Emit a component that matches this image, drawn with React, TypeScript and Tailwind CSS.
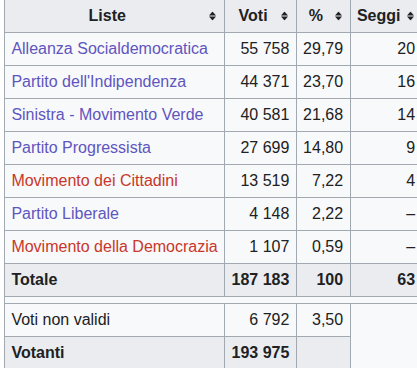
import React from 'react';

type Lista = {
  nome: string;
  voti: string;
  perc: string;
  seggi: string;
  redLink?: boolean;
};

const liste: Lista[] = [
  { nome: 'Alleanza Socialdemocratica', voti: '55 758', perc: '29,79', seggi: '20' },
  { nome: "Partito dell'Indipendenza", voti: '44 371', perc: '23,70', seggi: '16' },
  { nome: 'Sinistra - Movimento Verde', voti: '40 581', perc: '21,68', seggi: '14' },
  { nome: 'Partito Progressista', voti: '27 699', perc: '14,80', seggi: '9' },
  { nome: 'Movimento dei Cittadini', voti: '13 519', perc: '7,22', seggi: '4', redLink: true },
  { nome: 'Partito Liberale', voti: '4 148', perc: '2,22', seggi: '–' },
  { nome: 'Movimento della Democrazia', voti: '1 107', perc: '0,59', seggi: '–', redLink: true },
];

function SortIcon() {
  return (
    <svg
      className="absolute right-[8px] top-1/2 -translate-y-1/2"
      width="7"
      height="9"
      viewBox="0 0 7 9"
    >
      <polygon points="0,4 3.5,0 7,4" fill="#202122" />
      <polygon points="0,5 7,5 3.5,9" fill="#202122" />
    </svg>
  );
}

const cell = 'border border-[#a2a9b1] px-[6.4px] py-[3.2px] leading-[25.6px] whitespace-nowrap';
const head = `${cell} relative bg-[#eaecf0] font-bold text-center pr-[21px]`;

export default function App() {
  return (
    <div className="w-[417px] h-[368px] overflow-hidden bg-white">
      <table
        className="ml-1 -mt-px border-collapse table-fixed text-[16px] text-[#202122] bg-[#f8f9fa]"
        style={{ fontFamily: '"Liberation Sans", Arial, sans-serif' }}
      >
        <colgroup>
          <col className="w-[220px]" />
          <col className="w-[72px]" />
          <col className="w-[53px]" />
          <col className="w-[72px]" />
        </colgroup>
        <thead>
          <tr>
            <th className={head}>
              Liste
              <SortIcon />
            </th>
            <th className={head}>
              Voti
              <SortIcon />
            </th>
            <th className={head}>
              %
              <SortIcon />
            </th>
            <th className={head}>
              Seggi
              <SortIcon />
            </th>
          </tr>
        </thead>
        <tbody>
          {liste.map((l) => (
            <tr key={l.nome}>
              <td className={`${cell} ${l.redLink ? 'text-[#c8372a]' : 'text-[#5f55bf]'}`}>{l.nome}</td>
              <td className={`${cell} text-right`}>{l.voti}</td>
              <td className={`${cell} text-right`}>{l.perc}</td>
              <td className={`${cell} text-right`}>{l.seggi}</td>
            </tr>
          ))}
          <tr className="bg-[#eaecf0] font-bold">
            <td className={`${cell} text-left`}>Totale</td>
            <td className={`${cell} text-right`}>187 183</td>
            <td className={`${cell} text-right`}>100</td>
            <td className={`${cell} text-right`}>63</td>
          </tr>
          <tr>
            <td colSpan={4} className="border border-[#a2a9b1] h-[7px] p-0" />
          </tr>
          <tr>
            <td className={cell}>Voti non validi</td>
            <td className={`${cell} text-right`}>6 792</td>
            <td className={`${cell} text-right`}>3,50</td>
            <td rowSpan={2} className="border border-[#a2a9b1] border-r-0 border-b-0" />
          </tr>
          <tr className="bg-[#eaecf0] font-bold">
            <td className={cell}>Votanti</td>
            <td className={`${cell} text-right`}>193 975</td>
            <td className={cell} />
          </tr>
        </tbody>
      </table>
    </div>
  );
}
